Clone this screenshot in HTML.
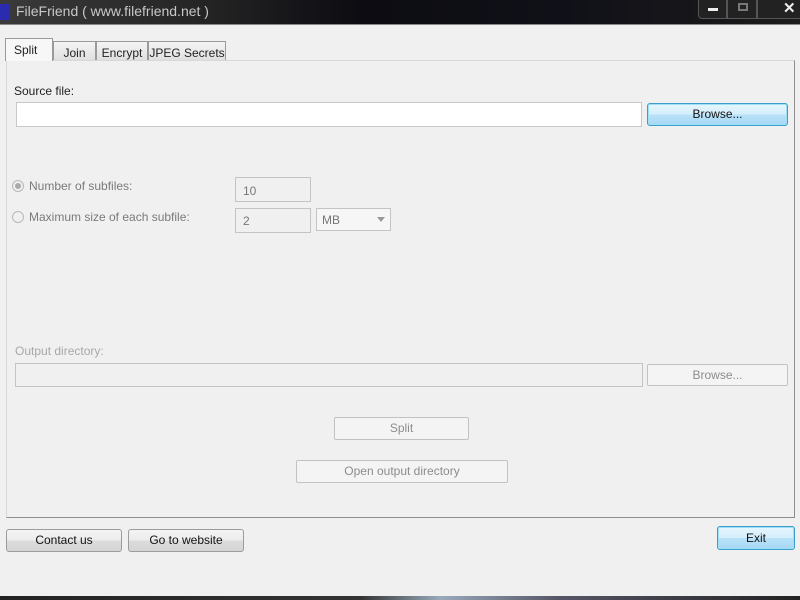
<!DOCTYPE html>
<html><head><meta charset="utf-8"><style>
*{margin:0;padding:0;box-sizing:border-box}
body{width:800px;height:600px;overflow:hidden;background:#f0f0f0;font-family:"Liberation Sans",sans-serif;font-size:12px;color:#222;position:relative}
.a{position:absolute}
.title{left:0;top:0;width:800px;height:24px;background:linear-gradient(90deg,#3a3a3a 0%,#252525 25%,#0c0c12 45%,#101018 70%,#1c1c1c 100%)}
.title .t{left:16px;top:3px;color:#c8c8c8;font-size:14px}
.title .ic{left:0;top:4px;width:9px;height:16px;background:#2b2bb0}
.wb{top:0;height:19px;border:1px solid #555;border-top:none;background:#222}
.tab{border:1px solid #9a9a9a;border-bottom:none;background:linear-gradient(#f4f4f4,#e0e0e0);text-align:center;font-size:12px;padding-top:4px}
.page{left:6px;top:60px;width:789px;height:458px;border:1px solid #8e8e8e;border-top:1px solid #d8d8d8;border-left:1px solid #d8d8d8;background:#f0f0f0}
.in{border:1px solid #c8c8c8;background:#fff}
.dis{border:1px solid #c4c4c4;background:#f0f0f0}
.btn{border:1px solid #9c9c9c;border-radius:3px;background:linear-gradient(#f4f4f4 0%,#ececec 50%,#dcdcdc 51%,#d4d4d4 100%);text-align:center;font-size:12px;color:#111}
.btnb{border:1px solid #3c9ccc;border-radius:3px;background:linear-gradient(#e6f6fd 0%,#d4eefc 50%,#b8e2f8 51%,#a8d8f4 100%);box-shadow:inset 0 0 0 1px #9ee0fa;text-align:center;font-size:12px;color:#111}
.btnd{border:1px solid #c2c2c2;border-radius:2px;background:#f4f4f4;text-align:center;font-size:12px;color:#8c8c8c}
.g{color:#7a7a7a}
.radio{width:12px;height:12px;border:1px solid #b8b8b8;border-radius:50%;background:#f0f0f0}
</style></head><body>
<div class="a title"><div class="a ic"></div><div class="a t">FileFriend ( www.filefriend.net )</div>
<div class="a wb" style="left:698px;width:29px;border-radius:0 0 0 4px"><div class="a" style="left:9px;top:8px;width:10px;height:3px;background:#eee"></div></div>
<div class="a wb" style="left:727px;width:30px"><div class="a" style="left:10px;top:3px;width:10px;height:8px;border:2px solid #777"></div></div>
<div class="a wb" style="left:757px;width:43px;border-right:none"><div class="a" style="left:25px;top:-1px;color:#eee;font-weight:bold;font-size:15px">✕</div></div>
</div>
<div class="a" style="left:0;top:24px;width:800px;height:1px;background:#888"></div>

<div class="a tab" style="left:53px;top:41px;width:43px;height:19px">Join</div>
<div class="a tab" style="left:96px;top:41px;width:52px;height:19px">Encrypt</div>
<div class="a tab" style="left:148px;top:41px;width:78px;height:19px">JPEG Secrets</div>
<div class="a page"></div>
<div class="a tab" style="left:5px;top:38px;width:48px;height:23px;background:#f7f7f7;padding-top:4px;text-align:left;padding-left:8px">Split</div>

<div class="a" style="left:14px;top:84px;font-size:12px">Source file:</div>
<div class="a in" style="left:16px;top:102px;width:626px;height:25px"></div>
<div class="a btnb" style="left:647px;top:103px;width:141px;height:23px;line-height:21px">Browse...</div>

<div class="a radio" style="left:12px;top:180px"><div class="a" style="left:2px;top:2px;width:6px;height:6px;border-radius:50%;background:#aaa"></div></div>
<div class="a g" style="left:29px;top:179px">Number of subfiles:</div>
<div class="a dis" style="left:235px;top:177px;width:76px;height:25px;padding:6px 0 0 7px;color:#777">10</div>
<div class="a radio" style="left:12px;top:211px"></div>
<div class="a g" style="left:29px;top:210px">Maximum size of each subfile:</div>
<div class="a dis" style="left:235px;top:208px;width:76px;height:25px;padding:5px 0 0 7px;color:#777">2</div>
<div class="a dis" style="left:316px;top:208px;width:75px;height:23px;padding:4px 0 0 5px;color:#777;background:#f6f6f6">MB<span class="a" style="left:60px;top:8px;width:0;height:0;border-left:4px solid transparent;border-right:4px solid transparent;border-top:5px solid #999"></span></div>

<div class="a" style="left:15px;top:344px;color:#a8a8a8">Output directory:</div>
<div class="a dis" style="left:15px;top:363px;width:628px;height:24px"></div>
<div class="a btnd" style="left:647px;top:364px;width:141px;height:22px;line-height:20px">Browse...</div>
<div class="a btnd" style="left:334px;top:417px;width:135px;height:23px;line-height:21px">Split</div>
<div class="a btnd" style="left:296px;top:460px;width:212px;height:23px;line-height:21px">Open output directory</div>

<div class="a btn" style="left:6px;top:529px;width:116px;height:23px;line-height:21px">Contact us</div>
<div class="a btn" style="left:128px;top:529px;width:116px;height:23px;line-height:21px">Go to website</div>
<div class="a btnb" style="left:717px;top:526px;width:78px;height:24px;line-height:22px">Exit</div>

<div class="a" style="left:0;top:596px;width:800px;height:4px;background:linear-gradient(90deg,#222 0%,#333 45%,#9ab 55%,#556 70%,#222 100%)"></div>
</body></html>
